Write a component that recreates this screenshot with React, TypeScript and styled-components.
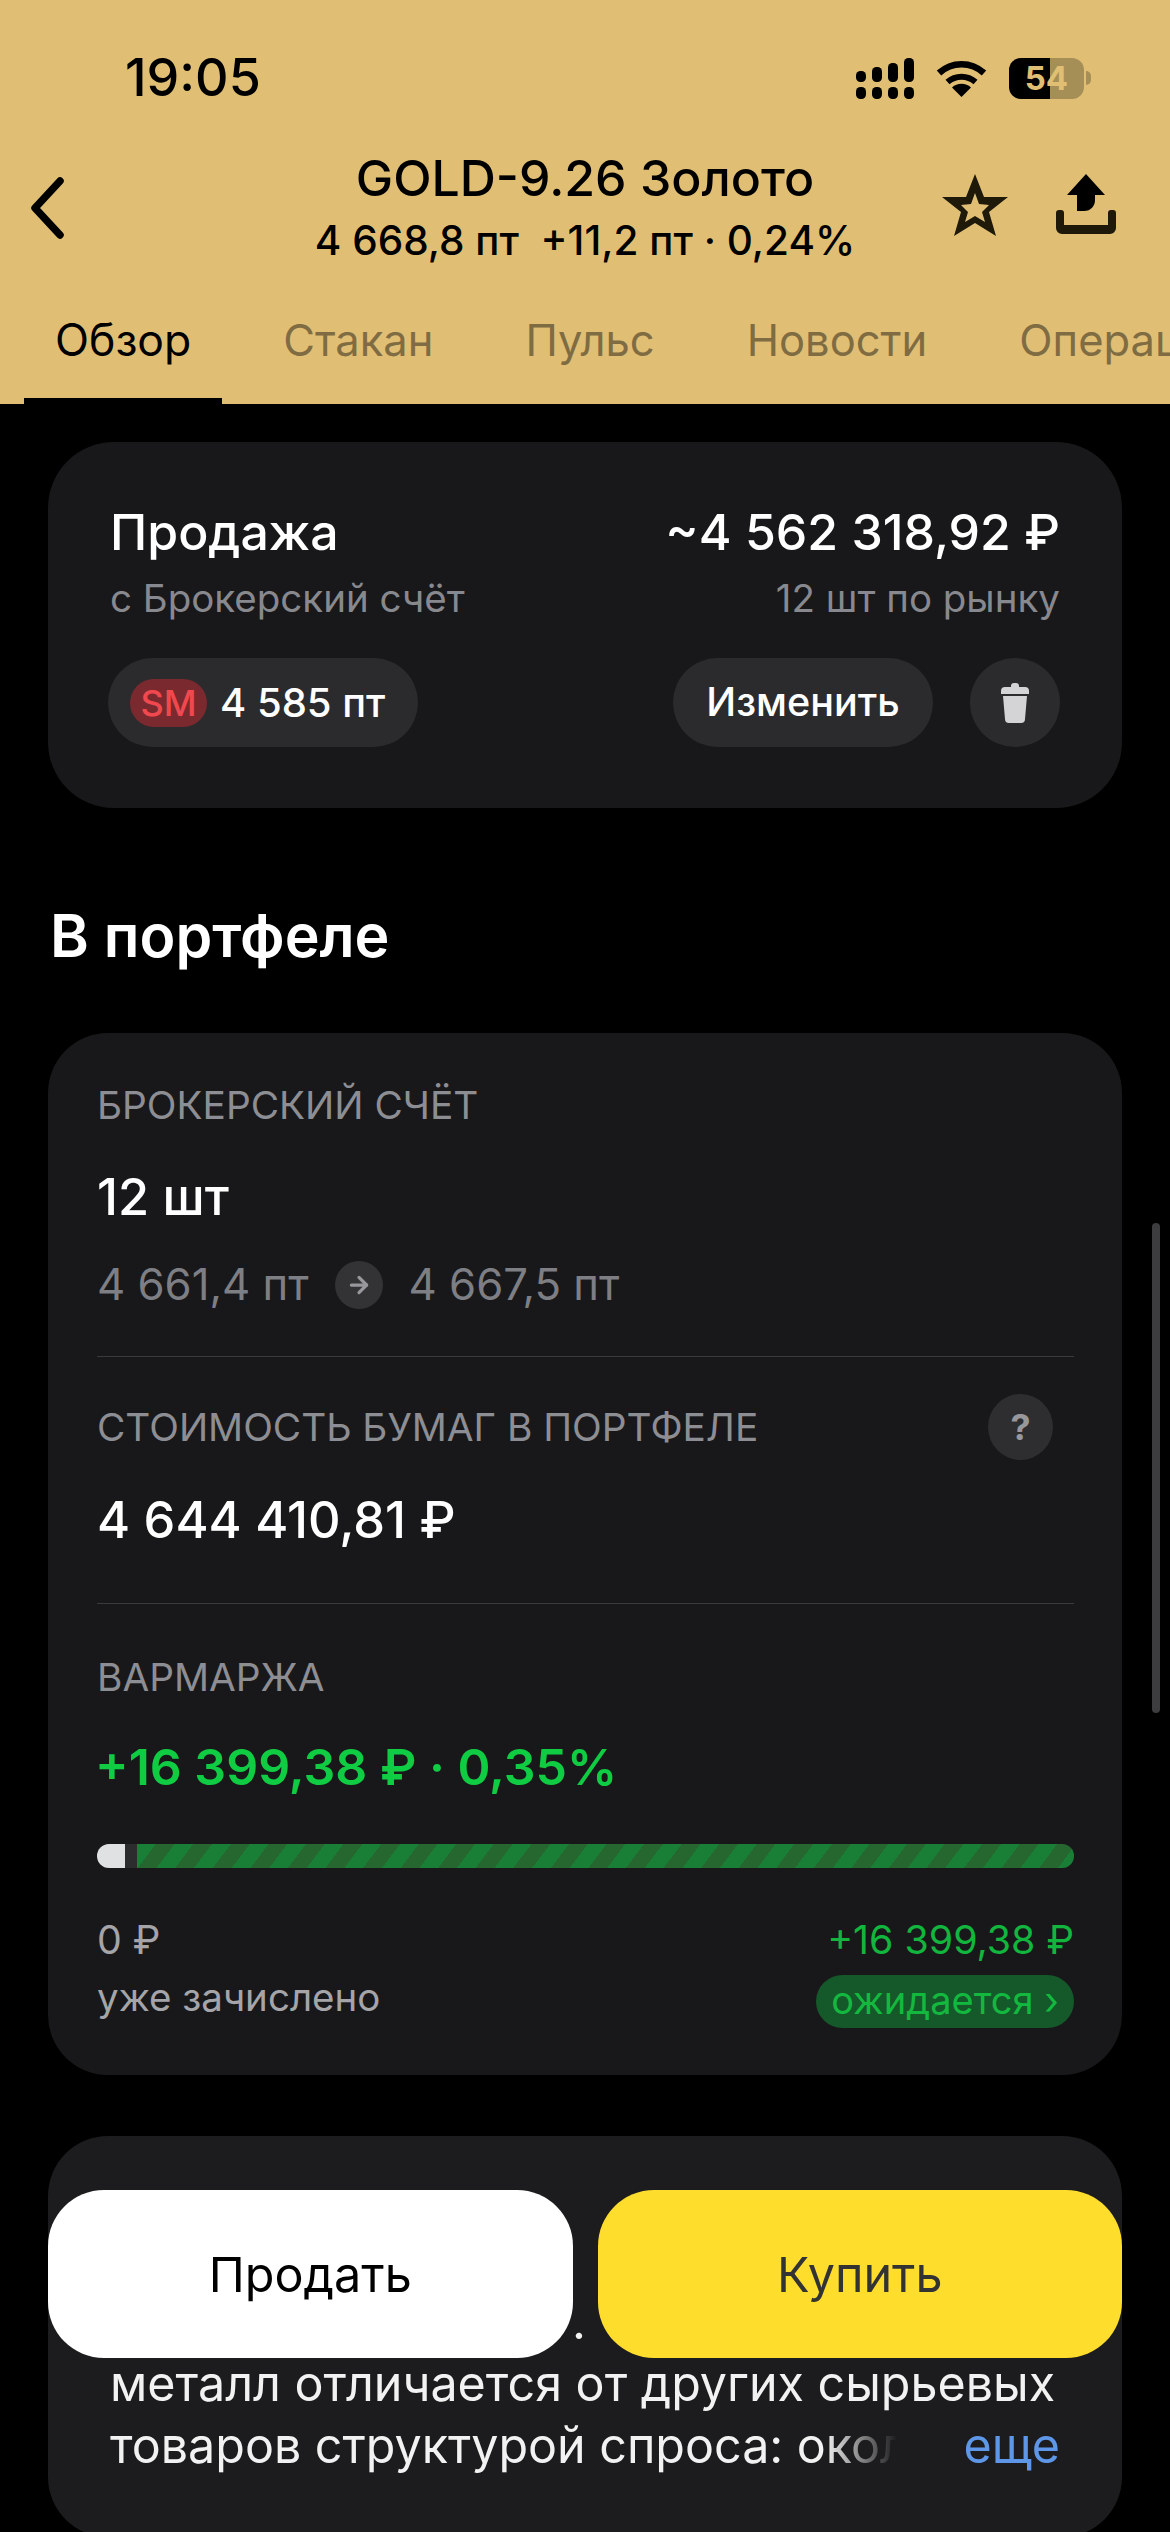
import React from 'react';
import { styled, createGlobalStyle } from 'styled-components';
import { ArrowRight } from 'lucide-react';

const GlobalStyle = createGlobalStyle`
  html, body {
    margin: 0;
    padding: 0;
    background: #000;
  }
  * {
    box-sizing: border-box;
  }
`;

const Screen = styled.div`
  position: relative;
  width: 1170px;
  height: 2532px;
  overflow: hidden;
  background: #000;
  font-family: Inter, "Noto Sans", sans-serif;
  color: #fff;
`;

const Header = styled.header`
  height: 404px;
  background: #e0bf75;
  color: #000;
  overflow: hidden;
`;

const StatusBar = styled.div`
  height: 149px;
  padding: 50px 79px 0 125px;
  display: flex;
  justify-content: space-between;
  align-items: flex-start;
`;

const Time = styled.div`
  font-size: 52px;
  font-weight: 500;
  line-height: 56px;
`;

const StatusIcons = styled.div`
  height: 56px;
  display: flex;
  align-items: center;
  gap: 22px;
`;

const Battery = styled.div`
  position: relative;
  width: 75px;
  height: 41px;
  border-radius: 12px;
  margin-right: 7px;
  background: linear-gradient(90deg, #000 55%, #a68e57 55%);
  color: #e0bf75;
  font-size: 33px;
  font-weight: 700;
  line-height: 41px;
  text-align: center;

  &::after {
    content: '';
    position: absolute;
    top: 13px;
    right: -7px;
    width: 5px;
    height: 14px;
    border-radius: 0 5px 5px 0;
    background: #a68e57;
  }
`;

const TitleRow = styled.div`
  height: 119px;
  display: grid;
  grid-template-columns: 1fr auto 1fr;
`;

const BackCell = styled.div`
  padding: 28px 0 0 30px;
`;

const TitleCell = styled.div`
  text-align: center;
`;

const Title = styled.div`
  font-size: 50px;
  font-weight: 500;
  line-height: 58px;
  white-space: nowrap;
`;

const Quote = styled.div`
  margin-top: 9px;
  font-size: 40.5px;
  font-weight: 500;
  line-height: 50px;
  white-space: pre;
`;

const ActionCell = styled.div`
  padding: 25px 54px 0 0;
  display: flex;
  justify-content: flex-end;
  align-items: flex-start;
  gap: 48px;
`;

const Tabs = styled.nav`
  height: 136px;
  padding-left: 24px;
  display: flex;
  gap: 30px;
`;

const Tab = styled.div<{ $active?: boolean }>`
  flex-shrink: 0;
  height: 136px;
  padding: 45px 31px 0;
  font-size: ${props => (props.$active ? '44.5px' : '43.5px')};
  line-height: 54px;
  color: ${props => (props.$active ? '#000' : '#7f6c42')};
  border-bottom: 6px solid ${props => (props.$active ? '#000' : 'transparent')};
`;

const Content = styled.main`
  padding: 38px 48px 0;
`;

const OrderCard = styled.section`
  height: 366px;
  padding: 60px 62px;
  border-radius: 66px;
  background: #18181a;
`;

const OrderRow = styled.div`
  display: flex;
  justify-content: space-between;
`;

const OrderTitle = styled.div`
  font-size: 50px;
  font-weight: 500;
  line-height: 60px;
`;

const OrderNote = styled.div`
  margin-top: 12px;
  font-size: 38.5px;
  line-height: 48px;
  color: #88898e;
`;

const OrderActions = styled.div`
  margin-top: 36px;
  display: flex;
  align-items: center;
`;

const StopPill = styled.div`
  width: 310px;
  height: 89px;
  margin-left: -2px;
  padding-left: 22px;
  display: flex;
  align-items: center;
  gap: 13px;
  border-radius: 45px;
  background: #2b2b2e;
  font-size: 40px;
  font-weight: 500;
`;

const StopBadge = styled.span`
  width: 77px;
  height: 48px;
  border-radius: 24px;
  background: #7a2a2e;
  color: #f0484e;
  font-size: 36px;
  font-weight: 500;
  line-height: 48px;
  text-align: center;
`;

const EditButton = styled.div`
  width: 260px;
  height: 89px;
  margin-left: auto;
  border-radius: 45px;
  background: #2b2b2e;
  font-size: 39.5px;
  font-weight: 500;
  line-height: 89px;
  text-align: center;
`;

const TrashButton = styled.div`
  width: 90px;
  height: 89px;
  margin-left: 37px;
  display: flex;
  align-items: center;
  justify-content: center;
  border-radius: 50%;
  background: #2b2b2e;
`;

const SectionTitle = styled.h2`
  margin: 94px 0 63px;
  padding-left: 2px;
  font-size: 59px;
  font-weight: 600;
  line-height: 68px;
`;

const PortfolioCard = styled.section`
  padding: 0 48px 47px 49px;
  border-radius: 60px;
  background: #18181a;
`;

const Block = styled.div<{ $top: number; $bottom?: number; $divider?: boolean }>`
  padding: ${props => props.$top}px 0 ${props => props.$bottom ?? 0}px;
  border-bottom: ${props => (props.$divider ? '1px solid #3a3a3c' : 'none')};
`;

const LabelRow = styled.div`
  display: flex;
  justify-content: space-between;
  align-items: center;
  height: 46px;
`;

const Label = styled.div`
  font-size: 38.8px;
  line-height: 46px;
  color: #8d8e94;
`;

const HelpBadge = styled.div`
  width: 65px;
  height: 66px;
  margin-right: 21px;
  border-radius: 50%;
  background: #2e2e31;
  color: #97979c;
  font-size: 36px;
  font-weight: 700;
  line-height: 66px;
  text-align: center;
`;

const Amount = styled.div<{ $top: number; $green?: boolean }>`
  margin-top: ${props => props.$top}px;
  font-size: 50.5px;
  font-weight: ${props => (props.$green ? 600 : 500)};
  line-height: 60px;
  color: ${props => (props.$green ? '#0fcc43' : '#fff')};
`;

const GreenAmount = styled(Amount)`
  margin-left: -2px;
  margin-bottom: 1px;
  font-size: 50px;
`;

const PriceRow = styled.div`
  margin-top: 32px;
  display: flex;
  align-items: center;
  font-size: 43.7px;
  line-height: 52px;
  color: #7e7f84;
`;

const PriceArrow = styled.span`
  width: 48px;
  height: 48px;
  margin: 0 26px;
  display: flex;
  align-items: center;
  justify-content: center;
  border-radius: 50%;
  background: #333336;
  color: #97979c;
`;

const Progress = styled.div`
  margin-top: 47px;
  height: 24px;
  display: flex;
  border-radius: 12px;
  overflow: hidden;
  background: #2c2c2e;
`;

const ProgressDone = styled.div`
  width: 28px;
  background: #dfe1e3;
`;

const ProgressPending = styled.div`
  flex: 1;
  margin-left: 12px;
  background: repeating-linear-gradient(
    127deg,
    #1a7f36 0,
    #1a7f36 15px,
    #25672f 15px,
    #25672f 30px
  );
`;

const Totals = styled.div`
  margin-top: 47px;
  display: flex;
  justify-content: space-between;
`;

const TotalColumn = styled.div<{ $right?: boolean }>`
  display: flex;
  flex-direction: column;
  align-items: ${props => (props.$right ? 'flex-end' : 'flex-start')};
  gap: 10px;
`;

const TotalValue = styled.div<{ $green?: boolean }>`
  font-size: 39.3px;
  line-height: 50px;
  color: ${props => (props.$green ? '#12b53d' : '#a5a5a9')};
`;

const TotalNote = styled.div`
  font-size: 38.5px;
  line-height: 45px;
  color: #a5a5a9;
`;

const PendingPill = styled.div`
  width: 258px;
  height: 53px;
  border-radius: 27px;
  background: #15582a;
  color: #13b83f;
  font-size: 38px;
  line-height: 51px;
  text-align: center;
  white-space: nowrap;
`;

const AboutCard = styled.section`
  margin-top: 61px;
  padding: 155px 62px 60px;
  border-radius: 60px;
  background: #1c1c1e;
  font-size: 48.4px;
  line-height: 62px;
  color: #f2f2f2;
`;

const AboutDot = styled.div`
  padding-left: 462px;
`;

const AboutLine = styled.div`
  white-space: nowrap;
`;

const AboutLast = styled.div`
  display: flex;
  justify-content: space-between;
  white-space: pre;
`;

const FadedText = styled.span`
  -webkit-mask-image: linear-gradient(90deg, #000 25%, transparent 90%);
  mask-image: linear-gradient(90deg, #000 25%, transparent 90%);
`;

const MoreLink = styled.span`
  color: #5f97e8;
`;

const TradeBar = styled.div`
  position: absolute;
  left: 48px;
  right: 48px;
  bottom: 174px;
  display: flex;
  gap: 25px;
`;

const TradeButton = styled.div<{ $buy?: boolean }>`
  flex: 1;
  height: 168px;
  border-radius: 56px;
  background: ${props => (props.$buy ? '#ffdd2d' : '#fff')};
  color: ${props => (props.$buy ? '#333' : '#000')};
  font-size: 48.5px;
  line-height: 170px;
  text-align: center;
`;

const ScrollThumb = styled.div`
  position: absolute;
  top: 1223px;
  right: 10px;
  width: 8px;
  height: 490px;
  border-radius: 4px;
  background: #3d3d40;
`;

const SignalIcon = () => (
  <svg width="58" height="41" viewBox="0 0 58 41" fill="#000">
    <rect x="0" y="13" width="10" height="11" rx="4.5" />
    <rect x="16" y="9" width="10" height="15" rx="4.5" />
    <rect x="32" y="5" width="10" height="19" rx="4.5" />
    <rect x="48" y="0" width="10" height="24" rx="4.5" />
    <rect x="0" y="29" width="10" height="12" rx="4.5" />
    <rect x="16" y="29" width="10" height="12" rx="4.5" />
    <rect x="32" y="29" width="10" height="12" rx="4.5" />
    <rect x="48" y="29" width="10" height="12" rx="4.5" />
  </svg>
);

const WifiIcon = () => (
  <svg width="51" height="37" viewBox="0 0 51 37" fill="none">
    <path d="M3 13 A33 33 0 0 1 48 13" stroke="#000" strokeWidth="6.5" />
    <path d="M11.5 22 A21 21 0 0 1 39.5 22" stroke="#000" strokeWidth="6" />
    <path d="M25.5 37 L16 27.5 A14 14 0 0 1 35 27.5 Z" fill="#000" />
  </svg>
);

const BackIcon = () => (
  <svg width="34" height="62" viewBox="0 0 34 62" fill="none">
    <path d="M30 4 L5 31 L30 58" stroke="#000" strokeWidth="7.5" strokeLinecap="round" strokeLinejoin="round" />
  </svg>
);

const StarIcon = () => (
  <svg width="66" height="62" viewBox="0 0 66 62" fill="#1f1909">
    <path
      fillRule="evenodd"
      d="M33 0 L42 23 L66 23 L47 38 L54 62 L33 49 L12 62 L19 38 L0 23 L24 23 Z M33 19 L37 30 L47 31 L40 38 L43 48 L33 42 L23 48 L26 38 L19 31 L29 30 Z"
    />
  </svg>
);

const ShareIcon = () => (
  <svg width="60" height="60" viewBox="0 0 60 60">
    <path d="M30 0 L49 21 H39 V26 C39 32 35 37 28 37 H21 V21 H11 Z" fill="#000" />
    <path
      d="M0 39 a3 3 0 0 1 3 -3 H5 a3 3 0 0 1 3 3 V51 H52 V39 a3 3 0 0 1 3 -3 h2 a3 3 0 0 1 3 3 V54 a6 6 0 0 1 -6 6 H6 a6 6 0 0 1 -6 -6 Z"
      fill="#1f1909"
    />
  </svg>
);

const TrashIcon = () => (
  <svg width="28" height="40" viewBox="0 0 28 40" fill="#d4d4d6">
    <path d="M10 3 a3 3 0 0 1 3 -3 h2 a3 3 0 0 1 3 3 v1 h6 a4 4 0 0 1 4 4 v3 H0 V8 a4 4 0 0 1 4 -4 h6 Z" />
    <path d="M2 13 H26 L24 36 a4 4 0 0 1 -4 4 H8 a4 4 0 0 1 -4 -4 Z" />
  </svg>
);

const tabs = ['Обзор', 'Стакан', 'Пульс', 'Новости', 'Операции'];

export default function App() {
  return (
    <Screen>
      <GlobalStyle />
      <Header>
        <StatusBar>
          <Time>19:05</Time>
          <StatusIcons>
            <SignalIcon />
            <WifiIcon />
            <Battery>54</Battery>
          </StatusIcons>
        </StatusBar>
        <TitleRow>
          <BackCell>
            <BackIcon />
          </BackCell>
          <TitleCell>
            <Title>GOLD-9.26 Золото</Title>
            <Quote>4 668,8 пт  +11,2 пт · 0,24%</Quote>
          </TitleCell>
          <ActionCell>
            <StarIcon />
            <ShareIcon />
          </ActionCell>
        </TitleRow>
        <Tabs>
          {tabs.map((tab, i) => (
            <Tab key={tab} $active={i === 0}>
              {tab}
            </Tab>
          ))}
        </Tabs>
      </Header>

      <Content>
        <OrderCard>
          <OrderRow>
            <OrderTitle>Продажа</OrderTitle>
            <OrderTitle>~4 562 318,92 ₽</OrderTitle>
          </OrderRow>
          <OrderRow>
            <OrderNote>с Брокерский счёт</OrderNote>
            <OrderNote>12 шт по рынку</OrderNote>
          </OrderRow>
          <OrderActions>
            <StopPill>
              <StopBadge>SM</StopBadge>
              4 585 пт
            </StopPill>
            <EditButton>Изменить</EditButton>
            <TrashButton>
              <TrashIcon />
            </TrashButton>
          </OrderActions>
        </OrderCard>

        <SectionTitle>В портфеле</SectionTitle>

        <PortfolioCard>
          <Block $top={49} $bottom={45} $divider>
            <Label>БРОКЕРСКИЙ СЧЁТ</Label>
            <Amount $top={39}>12 шт</Amount>
            <PriceRow>
              4 661,4 пт
              <PriceArrow>
                <ArrowRight size={26} strokeWidth={3} />
              </PriceArrow>
              4 667,5 пт
            </PriceRow>
          </Block>
          <Block $top={47} $bottom={53} $divider>
            <LabelRow>
              <Label>СТОИМОСТЬ БУМАГ В ПОРТФЕЛЕ</Label>
              <HelpBadge>?</HelpBadge>
            </LabelRow>
            <Amount $top={40}>4 644 410,81 ₽</Amount>
          </Block>
          <Block $top={50}>
            <Label>ВАРМАРЖА</Label>
            <GreenAmount $top={37} $green>
              +16 399,38 ₽ · 0,35%
            </GreenAmount>
            <Progress>
              <ProgressDone />
              <ProgressPending />
            </Progress>
            <Totals>
              <TotalColumn>
                <TotalValue>0 ₽</TotalValue>
                <TotalNote>уже зачислено</TotalNote>
              </TotalColumn>
              <TotalColumn $right>
                <TotalValue $green>+16 399,38 ₽</TotalValue>
                <PendingPill>ожидается ›</PendingPill>
              </TotalColumn>
            </Totals>
          </Block>
        </PortfolioCard>

        <AboutCard>
          <AboutDot>.</AboutDot>
          <AboutLine>металл отличается от других сырьевых</AboutLine>
          <AboutLast>
            <span>
              товаров структурой спроса: <FadedText>окол</FadedText>
            </span>
            <MoreLink>еще</MoreLink>
          </AboutLast>
        </AboutCard>
      </Content>

      <TradeBar>
        <TradeButton>Продать</TradeButton>
        <TradeButton $buy>Купить</TradeButton>
      </TradeBar>
      <ScrollThumb />
    </Screen>
  );
}
